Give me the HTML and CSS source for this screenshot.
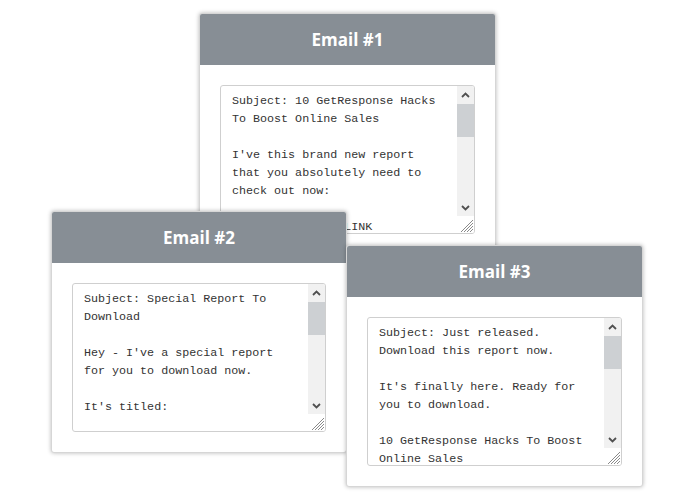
FILE: index.html
```html
<!DOCTYPE html>
<html>
<head>
<meta charset="utf-8">
<link rel="stylesheet" href="styles.css">
</head>
<body>
<div class="canvas">
  <div class="card card-1">
    <div class="card-head">Email #1</div>
    <div class="card-body">
      <div class="box">
        <div class="text">Subject: 10 GetResponse Hacks
To Boost Online Sales

I've this brand new report
that you absolutely need to
check out now:

INSERT DOWNLOAD LINK</div>
        <div class="sb-col">
          <div class="sb">
            <div class="sb-btn"><svg width="9" height="6" viewBox="0 0 9 6"><path d="M1 5 L4.5 1.5 L8 5" fill="none" stroke="#505050" stroke-width="1.8"/></svg></div>
            <div class="sb-track"><div class="sb-thumb"></div></div>
            <div class="sb-btn"><svg width="9" height="6" viewBox="0 0 9 6"><path d="M1 1 L4.5 4.5 L8 1" fill="none" stroke="#505050" stroke-width="1.8"/></svg></div>
          </div>
          <div class="corner"><svg width="17" height="17" viewBox="0 0 17 17"><path d="M4 16 L16 4 M7 16 L16 7 M10 16 L16 10 M13 16 L16 13" stroke="#8a8a8a" stroke-width="1"/></svg></div>
        </div>
      </div>
    </div>
  </div>

  <div class="card card-2">
    <div class="card-head">Email #2</div>
    <div class="card-body">
      <div class="box">
        <div class="text">Subject: Special Report To
Download

Hey - I've a special report
for you to download now.

It's titled:</div>
        <div class="sb-col">
          <div class="sb">
            <div class="sb-btn"><svg width="9" height="6" viewBox="0 0 9 6"><path d="M1 5 L4.5 1.5 L8 5" fill="none" stroke="#505050" stroke-width="1.8"/></svg></div>
            <div class="sb-track"><div class="sb-thumb"></div></div>
            <div class="sb-btn"><svg width="9" height="6" viewBox="0 0 9 6"><path d="M1 1 L4.5 4.5 L8 1" fill="none" stroke="#505050" stroke-width="1.8"/></svg></div>
          </div>
          <div class="corner"><svg width="17" height="17" viewBox="0 0 17 17"><path d="M4 16 L16 4 M7 16 L16 7 M10 16 L16 10 M13 16 L16 13" stroke="#8a8a8a" stroke-width="1"/></svg></div>
        </div>
      </div>
    </div>
  </div>

  <div class="card card-3">
    <div class="card-head">Email #3</div>
    <div class="card-body">
      <div class="box">
        <div class="text">Subject: Just released.
Download this report now.

It's finally here. Ready for
you to download.

10 GetResponse Hacks To Boost
Online Sales</div>
        <div class="sb-col">
          <div class="sb">
            <div class="sb-btn"><svg width="9" height="6" viewBox="0 0 9 6"><path d="M1 5 L4.5 1.5 L8 5" fill="none" stroke="#505050" stroke-width="1.8"/></svg></div>
            <div class="sb-track"><div class="sb-thumb"></div></div>
            <div class="sb-btn"><svg width="9" height="6" viewBox="0 0 9 6"><path d="M1 1 L4.5 4.5 L8 1" fill="none" stroke="#505050" stroke-width="1.8"/></svg></div>
          </div>
          <div class="corner"><svg width="17" height="17" viewBox="0 0 17 17"><path d="M4 16 L16 4 M7 16 L16 7 M10 16 L16 10 M13 16 L16 13" stroke="#8a8a8a" stroke-width="1"/></svg></div>
        </div>
      </div>
    </div>
  </div>
</div>
</body>
</html>
```
FILE: styles.css
```css
* { box-sizing: border-box; }
html, body { margin: 0; padding: 0; background: #ffffff; }
.canvas {
  position: relative;
  width: 700px;
  height: 500px;
  overflow: hidden;
}
.card {
  position: absolute;
  width: 297px;
  background: #ffffff;
  border: 1px solid #d6d6d6;
  border-radius: 3px;
  box-shadow: 0 0 4px rgba(0, 0, 0, 0.28);
  overflow: hidden;
}
.card-1 { left: 199px; top: 13px; z-index: 1; }
.card-2 { left: 51px; top: 211px; width: 296px; z-index: 2; }
.card-3 { left: 346px; top: 245px; z-index: 3; }
.card-head {
  height: 51px;
  background: #878e95;
  color: #ffffff;
  font-family: "Open Sans", "Noto Sans", sans-serif;
  font-weight: 700;
  font-size: 17px;
  display: flex;
  align-items: center;
  justify-content: center;
}
.card-body {
  padding: 20px;
}
.box {
  height: 149px;
  border: 1px solid #cfcfcf;
  border-radius: 3px;
  display: flex;
  overflow: hidden;
  background: #ffffff;
}
.text {
  flex: 1;
  min-width: 0;
  padding: 6px 0 0 11px;
  font-family: "Liberation Mono", "Courier New", monospace;
  font-size: 11.7px;
  line-height: 18px;
  color: #333333;
  white-space: pre;
  overflow: hidden;
}
.sb-col {
  width: 17px;
  display: flex;
  flex-direction: column;
}
.sb {
  flex: 1;
  display: flex;
  flex-direction: column;
  background: #f1f1f1;
}
.sb-btn {
  height: 17px;
  display: flex;
  align-items: center;
  justify-content: center;
}
.sb-track {
  flex: 1;
  padding-top: 1px;
}
.sb-thumb {
  height: 33px;
  background: #cdd0d3;
}
.corner {
  height: 17px;
  background: #ffffff;
  display: flex;
}
```
